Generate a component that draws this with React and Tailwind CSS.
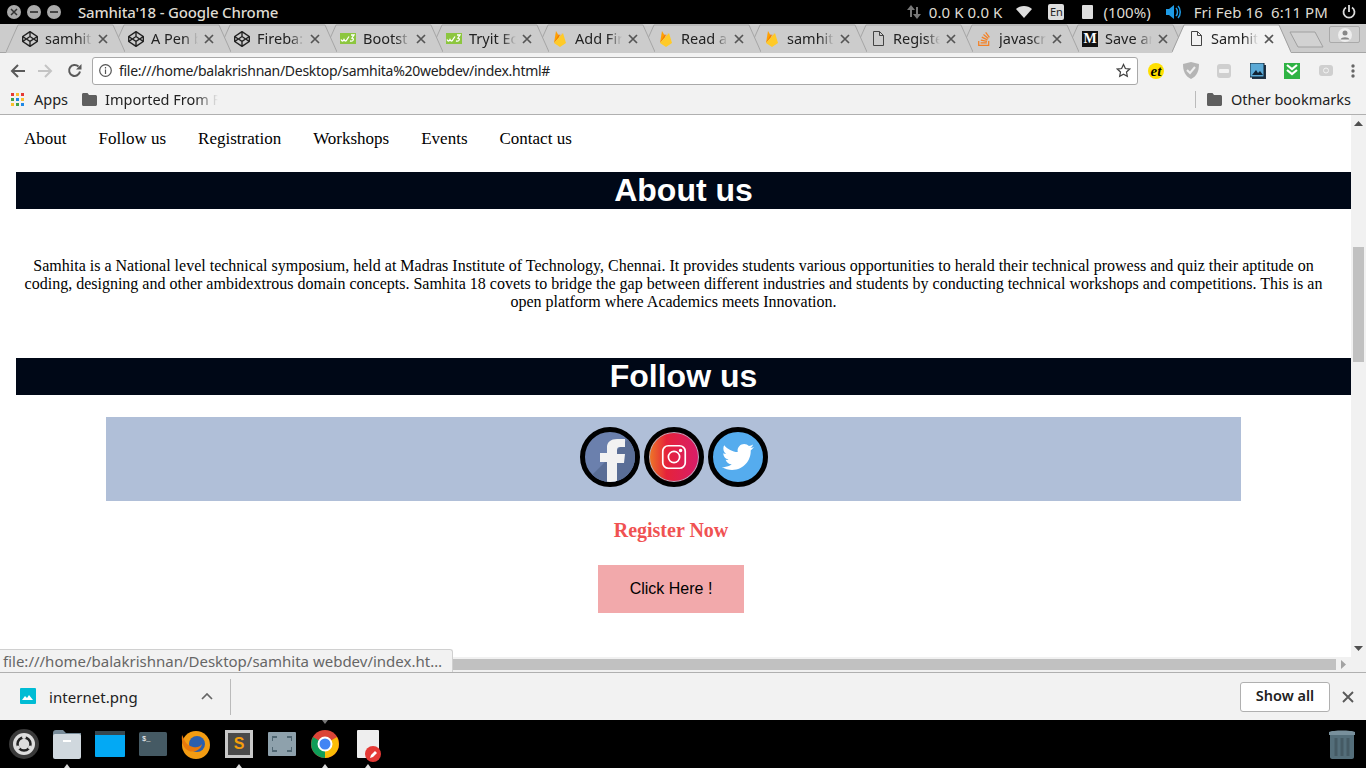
import React from "react";
import { FaTwitter, FaCodepen, FaStackOverflow } from "react-icons/fa";

const ui = "font-['Noto_Sans',sans-serif]";

const Codepen = () => <FaCodepen className="w-4 h-4 text-[#222]" />;
const W3 = () => (
  <svg width="16" height="11" viewBox="0 0 16 11"><rect width="16" height="11" fill="#8cc63f" /><path d="M1 6.500c1 2 2 2 3 0c1 2 2 2 3 0l2-3M11 2h3l-2 3c2 0 2 4-2 3" fill="none" stroke="#fff" strokeWidth="1.300" /></svg>
);
const Fire = () => (
  <svg width="14" height="17" viewBox="0 0 14 17"><path d="M1 13 3 1l3.500 6z" fill="#ffa000" /><path d="M1 13 6 4l1 2 2-3z" fill="#f57c00" /><path d="M1 13 10 3l3 10-6 4z" fill="#ffca28" /></svg>
);
const Doc = () => (
  <svg width="12" height="15" viewBox="0 0 12 15" fill="none" stroke="#444"><path d="M1.500.500h6l4 4v10h-10zM7.500.500v4h4" /></svg>
);
const Medium = () => <span className="w-4 h-4 bg-[#111] text-white text-[14px] leading-4 font-bold text-center font-['Liberation_Serif',serif]">M</span>;
const Stack = () => <FaStackOverflow className="w-4 h-4 text-[#f48024]" />;

const tabs = [
  ["samhit", Codepen], ["A Pen b", Codepen], ["Fireba:", Codepen], ["Bootst", W3], ["Tryit Ec", W3], ["Add Fir", Fire],
  ["Read a", Fire], ["samhit", Fire], ["Registe", Doc], ["javascr", Stack], ["Save ar", Medium], ["Samhit", Doc],
];

function Tab({ label, Icon, index }) {
  const active = index === 11;
  return (
    <div className="relative w-[106px] h-[29px] shrink-0" style={{ zIndex: active ? 30 : 20 - index }}>
      <svg className="absolute left-0 top-0" width="119" height="29" viewBox="0 0 119 29">
        <path d="M0 29 12 1H107L119 29Z" fill={active ? "#f2f2f2" : "#cccccc"} />
        <path d="M0 28 L12 1H107L119 28" fill="none" stroke={active ? "#a0a0a0" : "#a6a6a6"} strokeWidth="1" />
      </svg>
      <div className="absolute left-[16px] top-[4px] h-[21px] w-[90px] flex items-center gap-[7px]">
        <span className="w-4 flex justify-center shrink-0"><Icon /></span>
        <span className="w-[47px] overflow-hidden whitespace-nowrap text-[14.500px] text-[#222] [mask-image:linear-gradient(90deg,#000_70%,transparent)]">{label}</span>
      </div>
      <span className="absolute left-[89px] top-[5px] text-[#555]"><X /></span>
    </div>
  );
}

const X = () => (
  <svg width="16" height="19" viewBox="0 0 16 19"><path d="M4 6l8 8M12 6l-8 8" stroke="currentColor" strokeWidth="1.700" /></svg>
);

const Dot = ({ c, children }) => <span className={`w-[14px] h-[14px] rounded-full ${c} flex items-center justify-center`}>{children}</span>;

function TopBar() {
  return (
    <div className={`h-6 bg-black text-[#dfdbd2] text-[15px] flex items-center justify-between pl-[7px] pr-[10px] ${ui}`}>
      <div className="flex items-center">
        <div className="flex gap-[6px]">
          <Dot c="bg-[#aaa]"><svg width="8" height="8"><path d="M1 1l6 6M7 1l-6 6" stroke="#333" strokeWidth="1.500" /></svg></Dot>
          <Dot c="bg-[#aaa]"><span className="w-2 h-[2px] bg-[#444]" /></Dot>
          <Dot c="bg-[#aaa]"><span className="w-2 h-[2px] bg-[#444]" /></Dot>
        </div>
        <span className="ml-[17px] font-medium tracking-[-0.150px]">Samhita'18 - Google Chrome</span>
      </div>
      <div className="flex items-center">
        <svg width="14" height="16" viewBox="0 0 14 16" fill="#777"><path d="M4 1 0 6h3v7h2V6h3zM10 15l4-5h-3V3H9v7H6z" /></svg>
        <span className="ml-[8px] tracking-[0.100px]">0.0 K 0.0 K</span>
        <svg className="ml-[14px]" width="16" height="12" viewBox="0 0 16 12" fill="#ddd"><path d="M0 3c4-4 12-4 16 0l-8 9z" /></svg>
        <span className="ml-[16px] w-4 h-4 rounded-[2px] bg-[#ddd] text-[#222] text-[11px] leading-4 text-center">En</span>
        <span className="ml-[18px] w-[11px] h-[14px] bg-[#ddd] rounded-[1px]" />
        <span className="ml-[10px]">(100%)</span>
        <svg className="ml-[15px]" width="15" height="14" viewBox="0 0 15 14" fill="#1e9be6"><path d="M0 4h3l5-4v14l-5-4H0z" /><path d="M10 3c2 2 2 6 0 8M12 1c3 3 3 9 0 12" fill="none" stroke="#1e9be6" strokeWidth="1.500" /></svg>
        <span className="ml-[13px] whitespace-pre tracking-[0.100px]">Fri Feb 16  6:11 PM</span>
        <svg className="ml-[14px]" width="14" height="14" viewBox="0 0 14 14" fill="none" stroke="#ddd" strokeWidth="1.800"><path d="M7 0v7M4 2.500a5.500 5.500 0 1 0 6 0" /></svg>
      </div>
    </div>
  );
}

function TabStrip() {
  return (
    <div className={`h-[29px] bg-[#cccccc] border-b border-[#a6a6a6] flex pl-[6px] relative ${ui}`}>
      {tabs.map(([l, I], i) => <Tab key={i} label={l} Icon={I} index={i} />)}
      <svg className="ml-[11px] mt-[7px] shrink-0 relative z-40" width="35" height="17" viewBox="0 0 35 17"><path d="M1 1H26L34 16H9Z" fill="#d2d2d2" stroke="#a0a0a0" /></svg>
      <div className="absolute left-[1329px] top-[2px] w-[31px] h-[17px] border border-[#aaa] rounded-[2px] flex items-center justify-center bg-[#d0d0d0]">
        <svg width="14" height="14" viewBox="0 0 14 14"><circle cx="7" cy="7" r="7" fill="#eee" /><circle cx="7" cy="5" r="2.500" fill="#888" /><path d="M2.500 11.500c1-3 8-3 9 0" fill="#888" /></svg>
      </div>
    </div>
  );
}

function Toolbar() {
  return (
    <div className={`h-[35px] bg-[#f2f2f2] flex items-center ${ui}`}>
      <div className="w-[92px] flex items-center pl-[10px]">
        <svg width="15" height="14" viewBox="0 0 15 14" fill="none" stroke="#5a5a5a" strokeWidth="2"><path d="M15 7H2M8 1 2 7l6 6" /></svg>
        <svg className="ml-[13px]" width="15" height="14" viewBox="0 0 15 14" fill="none" stroke="#c4c4c4" strokeWidth="2"><path d="M0 7h13M7 1l6 6-6 6" /></svg>
        <svg className="ml-[14px]" width="15" height="15" viewBox="0 0 15 15" fill="none" stroke="#5a5a5a" strokeWidth="2"><path d="M13 8.500A5.500 5.500 0 1 1 11.500 3.500" /><path d="M14.500 1v5.500H9" fill="#5a5a5a" stroke="none" /></svg>
      </div>
      <div className="w-[1046px] h-[28px] bg-white border border-[#a9a9a9] rounded-[3px] flex items-center pl-[6px] pr-[6px]">
        <svg width="13" height="13" viewBox="0 0 13 13" fill="none" stroke="#555" strokeWidth="1.200"><circle cx="6.500" cy="6.500" r="5.800" /><path d="M6.500 5.500v4.500M6.500 3v1.500" /></svg>
        <span className="ml-[7px] text-[14px] tracking-[-0.280px] text-[#222] flex-1 whitespace-nowrap">file:///home/balakrishnan/Desktop/samhita%20webdev/index.html#</span>
        <svg width="15" height="15" viewBox="0 0 24 24" fill="none" stroke="#444" strokeWidth="2"><path d="m12 2.500 3 6.300 6.800.9-5 4.700 1.300 6.800-6.100-3.300-6.100 3.300 1.300-6.800-5-4.700 6.800-.9z" /></svg>
      </div>
      <div className="flex-1 flex items-center justify-between pl-[10px] pr-[11px]">
        <span className="w-4 h-4 rounded-full bg-[#ffe000] text-black text-[15px] leading-4 font-bold italic text-center font-['Liberation_Serif',serif]">et</span>
        <svg width="16" height="17" viewBox="0 0 16 17"><path d="M0 2 8 0l8 2c0 7-2 12-8 15C2 14 0 9 0 2z" fill="#b5b5b5" /><path d="m4 8 3 3 5-6" fill="none" stroke="#eee" strokeWidth="2" /></svg>
        <svg width="14" height="14" viewBox="0 0 14 14"><rect width="14" height="14" rx="3" fill="#cfcfcf" /><rect x="2" y="5" width="10" height="4" rx="1" fill="#f2f2f2" /></svg>
        <svg width="16" height="16" viewBox="0 0 16 16"><rect x="2" y="2" width="14" height="14" fill="#234" /><rect width="14" height="14" fill="#5aa9d6" stroke="#123" /><path d="m2 12 4-5 2 3 2-2 3 4z" fill="#123" /></svg>
        <svg width="16" height="16" viewBox="0 0 16 16"><rect width="16" height="16" fill="#2fb344" /><path d="m3 2 5 4 5-4M3 7l5 4 5-4" fill="none" stroke="#fff" strokeWidth="2.200" /></svg>
        <svg width="14" height="11" viewBox="0 0 14 11"><rect width="14" height="11" rx="3" fill="#cfcfcf" /><circle cx="7" cy="5.500" r="2.500" fill="none" stroke="#f2f2f2" /></svg>
        <svg width="4" height="14" viewBox="0 0 4 14" fill="#666"><circle cx="2" cy="2" r="1.700" /><circle cx="2" cy="7" r="1.700" /><circle cx="2" cy="12" r="1.700" /></svg>
      </div>
    </div>
  );
}

const Folder = () => <svg width="15" height="13" viewBox="0 0 15 13" fill="#5f5f5f"><path d="M0 1.500C0 .7.600 0 1.500 0h4l1.500 2h6.500c.8 0 1.500.7 1.500 1.500v8c0 .8-.7 1.500-1.500 1.500h-12C.6 13 0 12.300 0 11.500z" /></svg>;

function Bookmarks() {
  const colors = ["bg-[#e53935]", "bg-[#fbc02d]", "bg-[#e53935]", "bg-[#43a047]", "bg-[#1e88e5]", "bg-[#fbc02d]", "bg-[#fbc02d]", "bg-[#43a047]", "bg-[#1e88e5]"];
  return (
    <div className={`h-[27px] bg-[#f2f2f2] border-b border-[#b0b0b0] flex items-center justify-between pl-[11px] pr-[15px] pb-[3px] text-[14.500px] text-[#222] ${ui}`}>
      <div className="flex items-center">
        <div className="grid grid-cols-3 gap-[2px]">
          {colors.map((c, i) => <span key={i} className={`w-[3px] h-[3px] ${c}`} />)}
        </div>
        <span className="ml-[10px]">Apps</span>
        <span className="ml-[14px]"><Folder /></span>
        <span className="ml-[8px] w-[113px] overflow-hidden whitespace-nowrap [mask-image:linear-gradient(90deg,#000_80%,transparent)]">Imported From F</span>
      </div>
      <div className="flex items-center">
        <span className="w-px h-[17px] bg-[#bbb] mr-[11px]" />
        <Folder />
        <span className="ml-[9px]">Other bookmarks</span>
      </div>
    </div>
  );
}

const Heading = ({ children }) => (
  <h2 className="h-[37px] bg-[#000817] text-white text-center font-bold text-[32px] leading-[37px] font-['Liberation_Sans',sans-serif]">{children}</h2>
);

const Round = ({ children, c }) => (
  <span className={`w-[60px] h-[60px] rounded-full border-[5px] border-black overflow-hidden flex items-center justify-center ${c}`}>{children}</span>
);

function Page() {
  return (
    <div className="h-[542px] flex bg-white overflow-hidden">
      <div className="flex-1 pl-4 min-w-0 font-['Liberation_Serif',serif] text-black">
        <nav className="h-[57px] flex items-start pl-2 pt-[14px] gap-8 text-[17px] leading-[20px]">
          {["About", "Follow us", "Registration", "Workshops", "Events", "Contact us"].map((t) => <span key={t}>{t}</span>)}
        </nav>
        <Heading>About us</Heading>
        <p className="mt-[48px] w-[1315px] text-center text-[16px] leading-[18px] px-2">
          Samhita is a National level technical symposium, held at Madras Institute of Technology, Chennai. It provides students various opportunities to herald their technical prowess and quiz their aptitude on coding, designing and other ambidextrous domain concepts. Samhita 18 covets to bridge the gap between different industries and students by conducting technical workshops and competitions. This is an open platform where Academics meets Innovation.
        </p>
        <div className="mt-[47px]"><Heading>Follow us</Heading></div>
        <div className="ml-[90px] mt-[22px] w-[1135px] h-[84px] bg-[#b0bfd8] flex items-start justify-center gap-1 pt-[10px]">
          <Round c="bg-[#6b80ad]">
            <svg width="50" height="50" viewBox="0 0 50 50"><path d="M0 50 50 0v50z" fill="#5a6e96" /><path d="M22 50V30h-7v-9h7v-6c0-5 4-8 10-8h8v8h-5c-2 0-3 1-3 3v4h8l-1 9h-7v20z" fill="#f2f2f2" /></svg>
          </Round>
          <Round c="bg-[linear-gradient(90deg,#ee7a26,#e5233a_35%,#d81c6a)] ring-1 ring-inset ring-[#b0b0c0]">
            <svg width="30" height="30" viewBox="0 0 32 32" fill="none" stroke="#fff" strokeWidth="1.800"><rect x="4" y="4" width="24" height="24" rx="6" /><circle cx="16" cy="16" r="6" /><circle cx="23" cy="9" r="1" fill="#fff" /></svg>
          </Round>
          <Round c="bg-[#55acee]"><FaTwitter className="w-[32px] h-[32px] text-white" /></Round>
        </div>
        <div className="w-[1310px] flex flex-col items-center">
          <div className="mt-[17px] text-[20px] leading-6 font-bold text-[#f05252]">Register Now</div>
          <button className="mt-[23px] w-[146px] h-12 bg-[#f2a9ab] text-black text-[16px] font-['Liberation_Sans',sans-serif]">Click Here !</button>
        </div>
      </div>
      <div className="w-[15px] bg-[#f1f1f1] flex flex-col items-center shrink-0">
        <svg className="mt-[6px]" width="9" height="5"><path d="M4.500 0 9 5H0z" fill="#505050" /></svg>
        <div className="mt-[121px] w-[11px] h-[115px] bg-[#c1c1c1]" />
        <div className="flex-1" />
        <svg className="mb-[6px]" width="9" height="5"><path d="M4.500 5 9 0H0z" fill="#505050" /></svg>
      </div>
    </div>
  );
}

function HScroll() {
  return (
    <div className="h-[15px] bg-[#f1f1f1] flex items-center pr-[15px]">
      <div className="w-[1336px] h-[11px] bg-[#c1c1c1]" />
      <svg className="ml-[5px]" width="5" height="9"><path d="M0 0l5 4.500L0 9z" fill="#a3a3a3" /></svg>
    </div>
  );
}

function Downloads() {
  return (
    <div className={`h-[48px] bg-[#f2f2f2] border-t border-[#b0b0b0] flex items-center justify-between pl-5 pr-[12px] ${ui}`}>
      <div className="flex items-center h-full">
        <svg className="-mt-[2px]" width="16" height="16" viewBox="0 0 16 16"><rect width="16" height="16" rx="1" fill="#00bcd4" /><path d="m2 12 3-4 2 2 2-3 4 5z" fill="#fff" /></svg>
        <span className="ml-[13px] text-[15px] text-[#222] tracking-[0.050px] mt-[2px]">internet.png</span>
        <svg className="ml-[63px]" width="12" height="7" viewBox="0 0 12 7" fill="none" stroke="#666" strokeWidth="1.700"><path d="m1 6 5-5 5 5" /></svg>
        <span className="ml-[17px] w-px h-[36px] bg-[#bbb]" />
      </div>
      <div className="flex items-center mr-[3px]">
        <button className="w-[90px] h-[30px] pb-[2px] bg-white border border-[#b0b0b0] rounded-[3px] text-[14.500px] font-semibold text-[#222]">Show all</button>
        <span className="ml-[12px] -mr-[3px] text-[#5a5a5a]"><svg width="12" height="12" viewBox="0 0 12 12"><path d="m1 1 10 10M11 1 1 11" stroke="currentColor" strokeWidth="1.900" /></svg></span>
      </div>
    </div>
  );
}

function Dock() {
  return (
    <div className="h-[48px] bg-black flex items-center justify-between pl-[8px] pr-[11px] relative">
      <div className="flex items-center">
        <svg width="32" height="32" viewBox="0 0 32 32"><circle cx="16" cy="16" r="15" fill="#3a3a3a" /><circle cx="16" cy="16" r="11" fill="#ddd" /><circle cx="16" cy="16" r="6.500" fill="none" stroke="#222" strokeWidth="2.500" /><circle cx="16" cy="9" r="2" fill="#ddd" /><circle cx="10" cy="19.500" r="2" fill="#ddd" /><circle cx="22" cy="19.500" r="2" fill="#ddd" /></svg>
        <svg className="ml-[13px]" width="28" height="29" viewBox="0 0 28 29"><path d="M0 3c0-2 1-3 3-3h7l3 3h15v3H0z" fill="#778b99" /><rect y="4" width="28" height="25" rx="2" fill="#d0d8de" /><rect x="10" y="10" width="8" height="2" fill="#fff" /></svg>
        <svg className="ml-[14px]" width="30" height="26" viewBox="0 0 30 26"><rect width="30" height="26" rx="1" fill="#03a9f4" /><rect width="30" height="4" fill="#37474f" /></svg>
        <svg className="ml-[14px]" width="28" height="24" viewBox="0 0 28 24"><rect width="28" height="24" rx="1.500" fill="#455a64" /><text x="3" y="9" fontSize="7" fill="#fff" fontFamily="Liberation Mono">$_</text></svg>
        <svg className="ml-[14px]" width="29" height="29" viewBox="0 0 29 29"><circle cx="15" cy="15" r="14" fill="#f39c12" /><circle cx="16" cy="14" r="8" fill="#2b5fae" /><path d="M1 5c2 3 3 9 8 11s9 2 12-2c-1 6-8 9-13 7S0 13 1 5z" fill="#e8780c" /></svg>
        <div className="ml-[15px] w-[28px] h-[28px] bg-[#c9c9c9] flex items-center justify-center">
          <span className="w-[22px] h-[22px] bg-[#4a4a4a] text-[#f59e0b] text-[16px] leading-[22px] text-center font-bold font-['Liberation_Sans',sans-serif]">S</span>
        </div>
        <div className="ml-[15px] w-[28px] h-[24px] bg-[#8ea1ac] rounded-[1px] flex items-center justify-center">
          <svg width="20" height="16" viewBox="0 0 20 16" fill="none" stroke="#4f6672" strokeWidth="2"><path d="M0 5V1h5M15 1h5v4M20 11v4h-5M5 15H0v-4" /></svg>
        </div>
        <svg className="ml-[15px]" width="28" height="28" viewBox="0 0 28 28"><circle cx="14" cy="14" r="14" fill="#db4437" /><path d="M14 14 2 7A14 14 0 0 0 14 28z" fill="#0f9d58" /><path d="M14 14 26 7A14 14 0 0 1 14 28z" fill="#fbbc05" /><circle cx="14" cy="14" r="6.500" fill="#4285f4" stroke="#fff" strokeWidth="2" /></svg>
        <div className="ml-[18px] relative w-[22px] h-[28px] bg-[#eee] rounded-[1px]">
          <span className="absolute left-[8px] top-[16px] w-4 h-4 rounded-full bg-[#e53935] flex items-center justify-center">
            <svg width="9" height="9" viewBox="0 0 9 9"><path d="M1 8l1-3 4-4 2 2-4 4z" fill="#fff" /></svg>
          </span>
        </div>
      </div>
      <svg width="26" height="29" viewBox="0 0 26 29"><path d="M0 2c4-2 22-2 26 0v3H0z" fill="#78909c" /><path d="M1 5h24v22c0 1-1 2-2 2H3c-1 0-2-1-2-2z" fill="#546e7a" /><path d="M7 8v18M13 8v18M19 8v18" stroke="#455a64" strokeWidth="3" /></svg>
      <span className="absolute left-[64px] bottom-0 border-x-[3px] border-x-transparent border-b-[4px] border-b-[#ddd]" />
      <span className="absolute left-[236px] bottom-0 border-x-[3px] border-x-transparent border-b-[4px] border-b-[#ddd]" />
      <span className="absolute left-[322px] bottom-0 border-x-[3px] border-x-transparent border-b-[4px] border-b-[#ddd]" />
      <span className="absolute left-[365px] bottom-0 border-x-[3px] border-x-transparent border-b-[4px] border-b-[#ddd]" />
      <span className="absolute left-[322px] top-0 border-x-[3px] border-x-transparent border-t-[4px] border-t-[#777]" />
    </div>
  );
}

export default function App() {
  return (
    <div className="relative w-[1366px] h-[768px] overflow-hidden flex flex-col">
      <TopBar />
      <TabStrip />
      <Toolbar />
      <Bookmarks />
      <Page />
      <HScroll />
      <Downloads />
      <Dock />
      <div className={`absolute left-0 top-[649px] w-[453px] h-[23px] bg-[#f2f2f2] border-t border-r border-[#d0d0d0] rounded-tr-[3px] pl-[3px] text-[15px] leading-[22px] text-[#666] whitespace-nowrap ${ui}`}>file:///home/balakrishnan/Desktop/samhita webdev/index.ht…</div>
    </div>
  );
}
